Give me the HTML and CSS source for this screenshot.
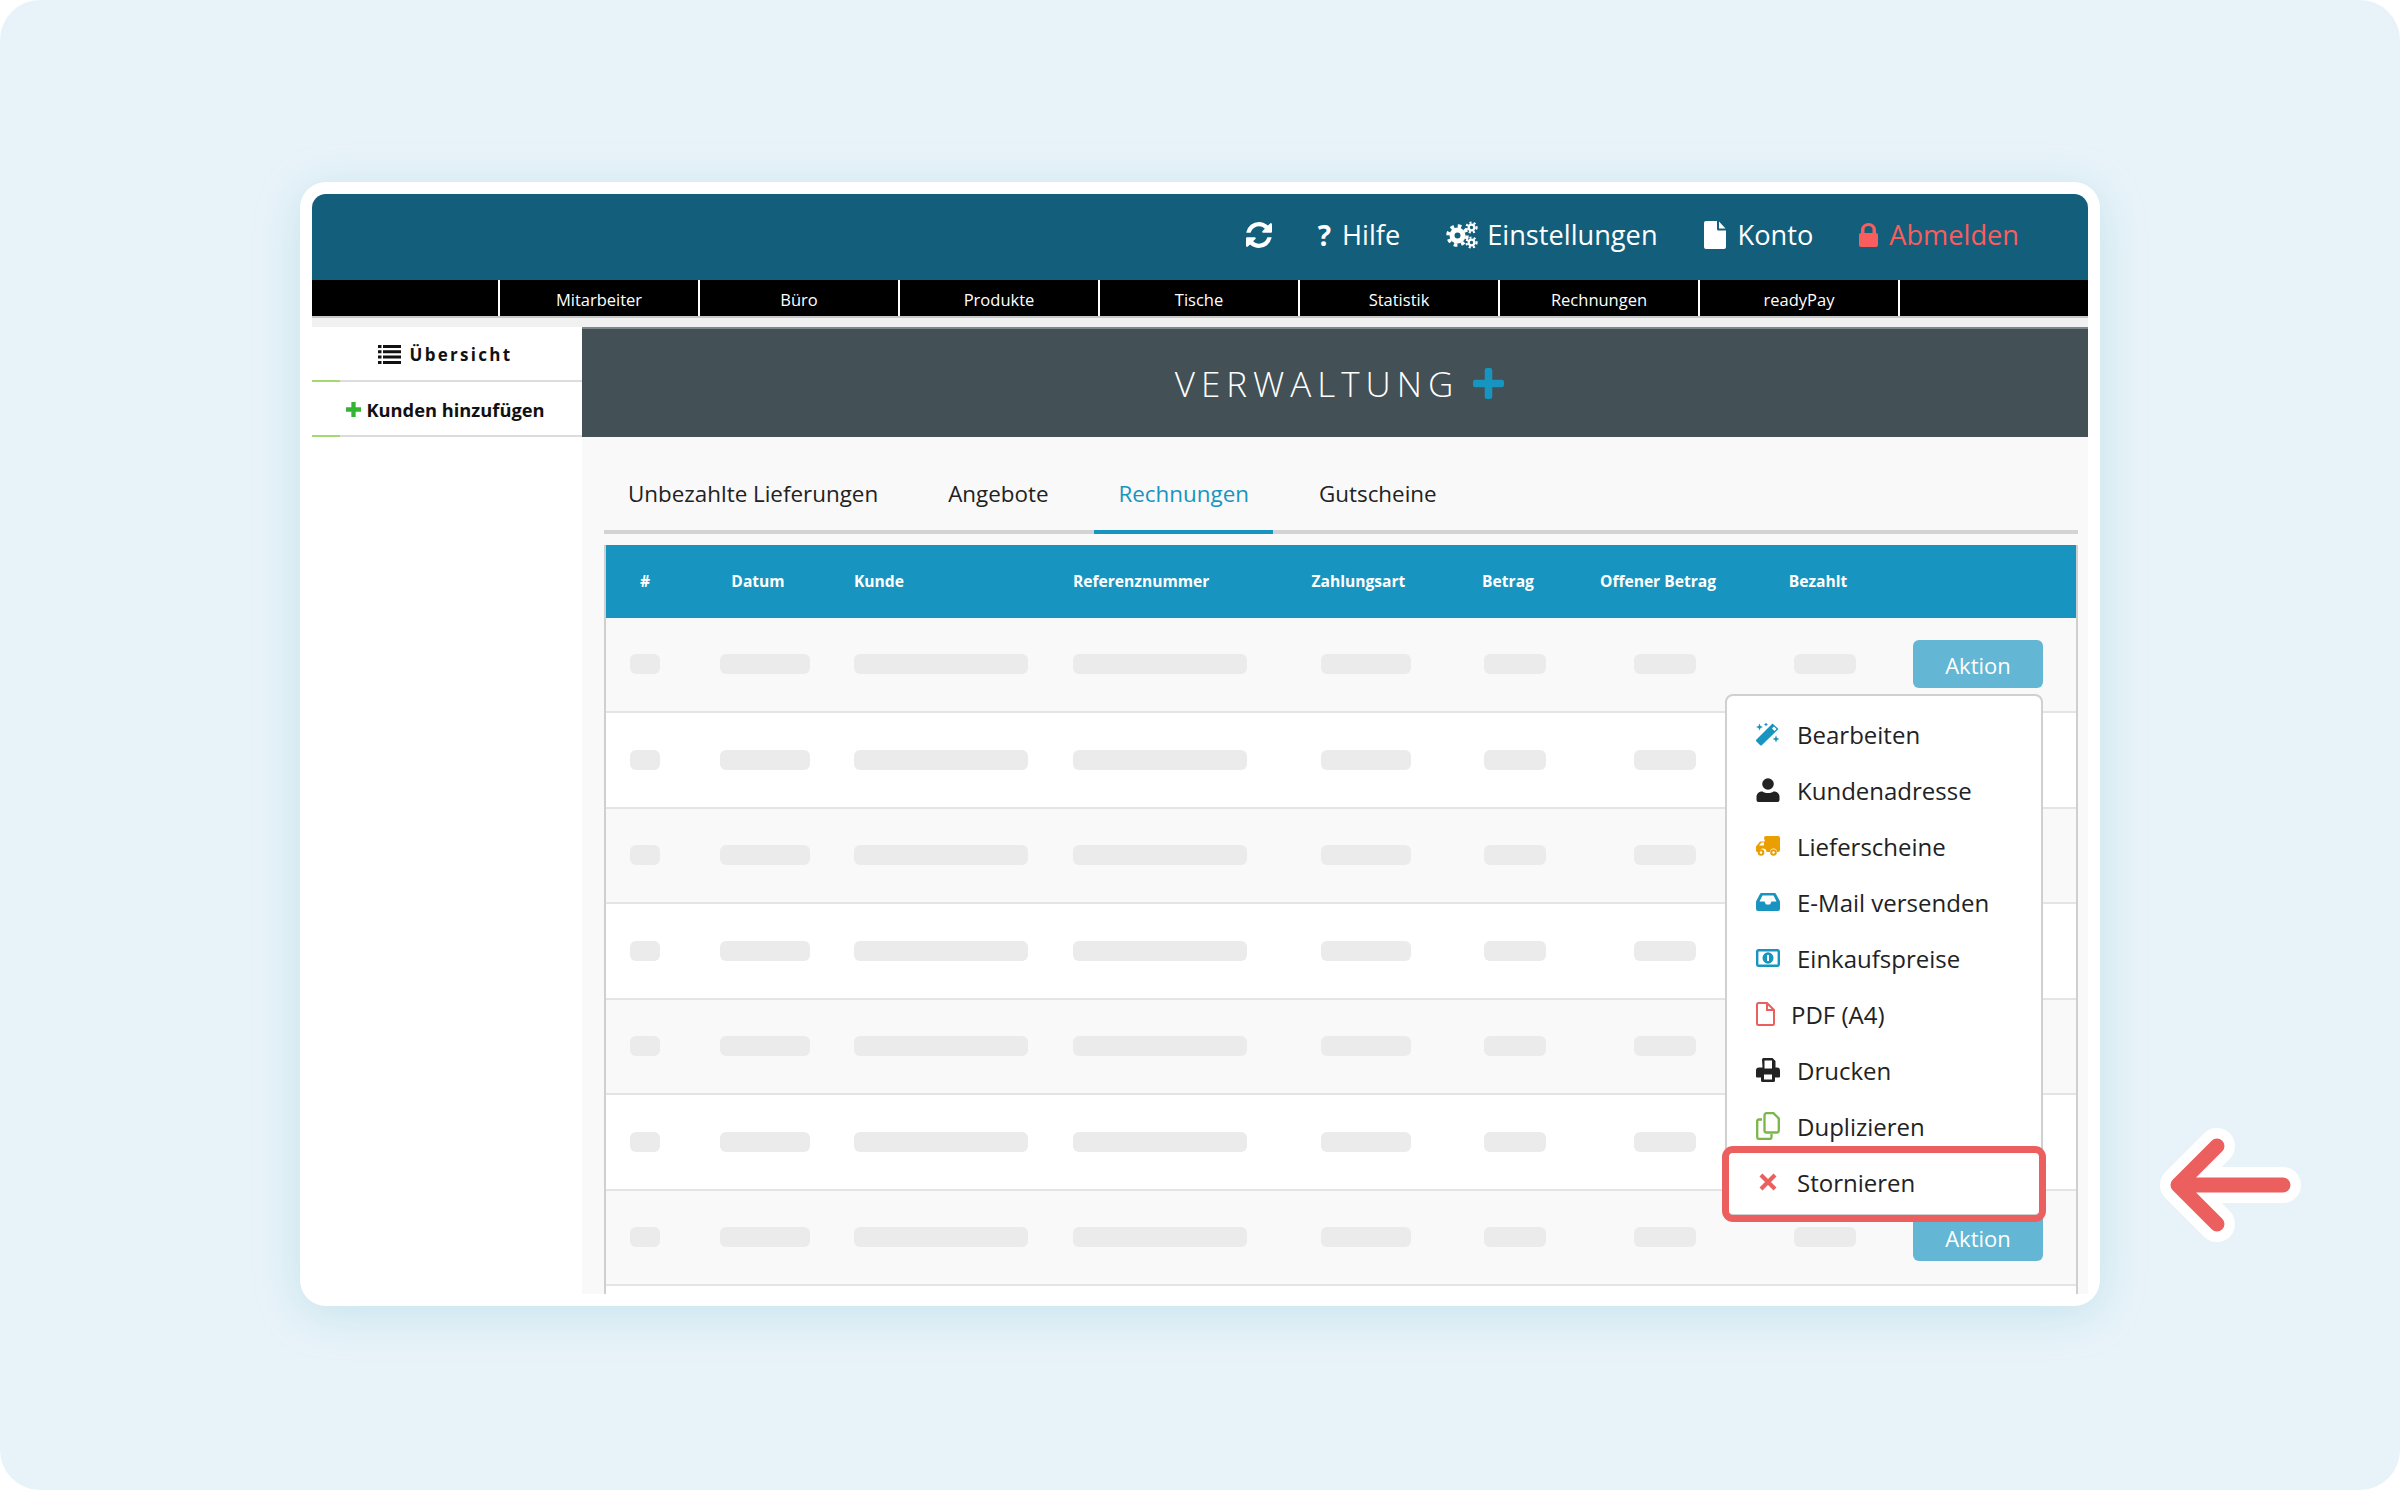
FILE: index.html
```html
<!DOCTYPE html>
<html lang="de">
<head>
    <meta charset="UTF-8">
    <title>Verwaltung</title>
    <link rel="stylesheet" href="styles.css">
</head>
<body>
<div class="panel">
<div class="card">
    <header class="top">
        <a class="top_item"><svg class="ic_refresh" viewBox="128 128 1536 1536"><path fill="#fff" d="M1639 1056q0 5-1 7-64 268-268 434.500t-478 166.500q-146 0-282.500-55t-243.500-157l-129 129q-19 19-45 19t-45-19-19-45v-448q0-26 19-45t45-19h448q26 0 45 19t19 45-19 45l-137 137q71 66 161 102t187 36q134 0 250-65t186-179q11-17 53-117 8-23 30-23h192q13 0 22.500 9.500t9.500 22.500zm25-800v448q0 26-19 45t-45 19h-448q-26 0-45-19t-19-45 19-45l138-138q-148-137-349-137-134 0-250 65t-186 179q-11 17-53 117-8 23-30 23h-199q-13 0-22.500-9.500t-9.500-22.500v-7q65-268 270-434.500t480-166.500q146 0 284 55.500t245 156.500l130-129q19-19 45-19t45 19 19 45z"/></svg></a>
        <a class="top_item"><b class="top_q">?</b>Hilfe</a>
        <a class="top_item"><svg class="ic_cogs" viewBox="0 0 32 28"><g fill="none" stroke="#fff"><circle cx="11.500" cy="14.500" r="5.500" stroke-width="5"/><circle cx="11.500" cy="14.500" r="9.500" stroke-width="3.500" stroke-dasharray="3.600 3.860"/><circle cx="25.500" cy="6.500" r="2.800" stroke-width="2.200"/><circle cx="25.500" cy="6.500" r="5" stroke-width="2.200" stroke-dasharray="2 2.190"/><circle cx="25.500" cy="21.500" r="2.800" stroke-width="2.200"/><circle cx="25.500" cy="21.500" r="5" stroke-width="2.200" stroke-dasharray="2 2.190"/></g></svg>Einstellungen</a>
        <a class="top_item"><svg class="ic_file" viewBox="0 0 22 28"><path fill="#fff" d="M2 0h11v8a1.500 1.500 0 0 0 1.500 1.500h7.500v16.500a2 2 0 0 1-2 2h-18a2 2 0 0 1-2-2v-24a2 2 0 0 1 2-2zM15 0.500l6.500 7h-6.500z"/></svg>Konto</a>
        <a class="top_item top_logout"><svg class="ic_lock" viewBox="0 0 19 24"><path fill="#f95d5d" d="M2 10v-3.500a7.500 6.500 0 0 1 15 0v3.500a2 2 0 0 1 2 2v10a2 2 0 0 1-2 2h-15a2 2 0 0 1-2-2v-10a2 2 0 0 1 2-2zM5.500 10h8v-3.500a4 3.500 0 0 0-8 0z"/></svg>Abmelden</a>
    </header>
    <nav class="bar">
        <span class="bar_first"></span>
        <a>Mitarbeiter</a>
        <a>Büro</a>
        <a>Produkte</a>
        <a>Tische</a>
        <a>Statistik</a>
        <a>Rechnungen</a>
        <a>readyPay</a>
    </nav>
    <div class="strip"></div>
    <div class="layout">
        <aside class="side">
            <a class="side_item side_spaced"><svg class="ic_list" viewBox="0 0 23 19"><path fill="#111" d="M0 0h3.500v3h-3.500zM5 0h18v3h-18zM0 5.300h3.500v3h-3.500zM5 5.300h18v3h-18zM0 10.600h3.500v3h-3.500zM5 10.600h18v3h-18zM0 16h3.500v3h-3.500zM5 16h18v3h-18z"/></svg>Übersicht</a>
            <a class="side_item side_big"><svg class="ic_plus_s" viewBox="0 0 14 14"><path fill="#33b533" d="M5 0h4v5h5v4h-5v5h-4v-5h-5v-4h5z"/></svg>Kunden hinzufügen</a>
        </aside>
        <main class="main">
            <div class="banner">
                <span>VERWALTUNG</span>
                <svg class="ic_plus_b" viewBox="0 0 14 14"><path fill="#1795c0" d="M5.300 1a1 1 0 0 1 1-1h1.400a1 1 0 0 1 1 1v4.300h4.300a1 1 0 0 1 1 1v1.400a1 1 0 0 1-1 1h-4.300v4.300a1 1 0 0 1-1 1h-1.400a1 1 0 0 1-1-1v-4.300h-4.300a1 1 0 0 1-1-1v-1.400a1 1 0 0 1 1-1h4.300z"/></svg>
            </div>
            <div class="content">
                <div class="tabs">
                    <a>Unbezahlte Lieferungen</a>
                    <a>Angebote</a>
                    <a class="tab_on">Rechnungen</a>
                    <a>Gutscheine</a>
                </div>
                <div class="table">
                    <div class="row head">
                        <span>#</span><span class="hc">Datum</span><span class="left">Kunde</span><span class="left">Referenznummer</span><span class="hc">Zahlungsart</span><span class="hc">Betrag</span><span class="hc">Offener Betrag</span><span class="hc">Bezahlt</span><span></span>
                    </div>
                    <div class="row"><i class="sk w30"></i><i class="sk w90"></i><i class="sk w174 left"></i><i class="sk w174 left"></i><i class="sk w90"></i><i class="sk w62"></i><i class="sk w62"></i><i class="sk w62"></i><a class="btn_action">Aktion</a></div>
                    <div class="row"><i class="sk w30"></i><i class="sk w90"></i><i class="sk w174 left"></i><i class="sk w174 left"></i><i class="sk w90"></i><i class="sk w62"></i><i class="sk w62"></i><i class="sk w62"></i></div>
                    <div class="row"><i class="sk w30"></i><i class="sk w90"></i><i class="sk w174 left"></i><i class="sk w174 left"></i><i class="sk w90"></i><i class="sk w62"></i><i class="sk w62"></i><i class="sk w62"></i></div>
                    <div class="row"><i class="sk w30"></i><i class="sk w90"></i><i class="sk w174 left"></i><i class="sk w174 left"></i><i class="sk w90"></i><i class="sk w62"></i><i class="sk w62"></i><i class="sk w62"></i></div>
                    <div class="row"><i class="sk w30"></i><i class="sk w90"></i><i class="sk w174 left"></i><i class="sk w174 left"></i><i class="sk w90"></i><i class="sk w62"></i><i class="sk w62"></i><i class="sk w62"></i></div>
                    <div class="row"><i class="sk w30"></i><i class="sk w90"></i><i class="sk w174 left"></i><i class="sk w174 left"></i><i class="sk w90"></i><i class="sk w62"></i><i class="sk w62"></i><i class="sk w62"></i></div>
                    <div class="row"><i class="sk w30"></i><i class="sk w90"></i><i class="sk w174 left"></i><i class="sk w174 left"></i><i class="sk w90"></i><i class="sk w62"></i><i class="sk w62"></i><i class="sk w62"></i><a class="btn_action">Aktion</a></div>
                    <div class="row"></div>
                </div>
            </div>
        </main>
    </div>

    <ul class="menu">
        <li><svg class="mi" viewBox="0 0 24 24"><path fill="#1795c0" d="M16.500 1.500l6 5.500-16.500 16a1.400 1.400 0 0 1-2 0l-3.500-3.500a1.400 1.400 0 0 1 0-2zM16 6.500l2.500 2.500 2-2-2.500-2.500z"/><path fill="#1795c0" d="M3.500 1.500l1 2.500 2.500 1-2.500 1-1 2.500-1-2.500-2.500-1 2.500-1zM10 0.500l.7 1.300 1.300.7-1.300.7-.7 1.300-.7-1.300-1.300-.7 1.300-.7zM20 13.500l1 2.500 2.500 1-2.500 1-1 2.500-1-2.500-2.500-1 2.500-1z"/></svg>Bearbeiten</li>
        <li><svg class="mi" viewBox="0 0 24 24"><circle cx="12" cy="6" r="5.800" fill="#222"/><path fill="#222" d="M2 24a2 2 0 0 1-1.500-2v-3c0-3.500 2.500-5.500 6-5.500 1.500 1 3.500 1.500 5.500 1.500s4-.5 5.500-1.500c3.500 0 6 2 6 5.500v3a2 2 0 0 1-1.500 2z"/></svg>Kundenadresse</li>
        <li><svg class="mi" viewBox="0 0 24 20"><path fill="#e99f00" d="M8 2a2 2 0 0 1 2-2h12a2 2 0 0 1 2 2v12a2 2 0 0 1-2 2h-1a3.500 3.500 0 0 0-7 0h-3.500a3.500 3.500 0 0 0-7 0h-2a1.500 1.500 0 0 1-1.500-1.500v-4l4-5h5z"/><path fill="#fff" d="M3 9.500l2.500-3h2.500v3z"/><circle cx="5" cy="16.500" r="2.300" fill="none" stroke="#e99f00" stroke-width="2"/><circle cx="17.500" cy="16.500" r="2.300" fill="none" stroke="#e99f00" stroke-width="2"/></svg>Lieferscheine</li>
        <li><svg class="mi" viewBox="0 0 24 18"><path fill="#1795c0" d="M6 0h12c1 0 1.800.5 2.300 1.400l3.700 7v7.600a2 2 0 0 1-2 2h-20a2 2 0 0 1-2-2v-7.600l3.700-7c.5-.9 1.300-1.400 2.300-1.400z"/><path fill="#fff" d="M6.500 2.500h11l3 6h-5l-1.500 3h-4l-1.500-3h-5z"/></svg>E-Mail versenden</li>
        <li><svg class="mi" viewBox="0 0 24 18"><rect x="1.200" y="1.200" width="21.600" height="15.600" rx="1.500" fill="#fff" stroke="#1795c0" stroke-width="2.400"/><ellipse cx="12" cy="9" rx="5.500" ry="5.800" fill="#1795c0"/><rect x="11" y="6" width="2" height="6" fill="#fff"/></svg>Einkaufspreise</li>
        <li class="pdf"><svg class="mi mi_pdf" viewBox="0 0 19 24"><path fill="none" stroke="#ec5f5f" stroke-width="2" d="M2.500 1h8.500l7 7v13.500a1.500 1.500 0 0 1-1.500 1.500h-14a1.500 1.500 0 0 1-1.500-1.500v-19a1.500 1.500 0 0 1 1.500-1.500zM11 1v7h7"/></svg>PDF (A4)</li>
        <li><svg class="mi" viewBox="0 0 24 24"><path fill="#222" d="M6 1.500a1.500 1.500 0 0 1 1.500-1.500h9l3 3v6.500h1.500a3 3 0 0 1 3 3v6a1 1 0 0 1-1 1h-4v3a1.500 1.500 0 0 1-1.500 1.500h-11a1.500 1.500 0 0 1-1.500-1.500v-3h-4a1 1 0 0 1-1-1v-6a3 3 0 0 1 3-3h3.500zM8.500 2.500v8h7.500v-8zM8 16.500v5h8v-5z"/></svg>Drucken</li>
        <li><svg class="mi" viewBox="0 0 24 28"><path fill="none" stroke="#7ab648" stroke-width="2.300" d="M10.500 1.200h7l5.300 5.300v12a2 2 0 0 1-2 2h-10.300a2 2 0 0 1-2-2v-15.300a2 2 0 0 1 2-2zM6 7.500h-3a2 2 0 0 0-1.800 2v15.500a2 2 0 0 0 1.800 2h10.500a2 2 0 0 0 2-2v-3"/></svg>Duplizieren</li>
        <li class="menu_hi"><svg class="mi" viewBox="0 0 24 24"><path fill="none" stroke="#ec5f5f" stroke-width="4.200" d="M5 5l14 14M19 5l-14 14"/></svg>Stornieren</li>
    </ul>

    <svg class="arrow" viewBox="0 0 160 120">
        <path fill="none" stroke="#fff" stroke-width="36" stroke-linecap="round" stroke-linejoin="round" d="M133 60h-105M67 21l-39 39 39 39"/>
        <path fill="none" stroke="#ec5f5f" stroke-width="15" stroke-linecap="round" stroke-linejoin="round" d="M133 60h-105M67 21l-39 39 39 39"/>
    </svg>
</div>
</div>
</body>
</html>
```

FILE: styles.css
```css
* {
    margin: 0;
    padding: 0;
    box-sizing: border-box;
}
body {
    background-color: #fff;
    font-family: "Open Sans", "Noto Sans", sans-serif;
    color: #222;
}
a {
    color: inherit;
    text-decoration: none;
}
svg {
    display: block;
    flex: none;
}

.panel {
    height: 1490px;
    display: flex;
    align-items: center;
    justify-content: center;
    padding-bottom: 2px;
    background-color: #e8f3f9;
    border-radius: 40px;
}
.card {
    position: relative;
    width: 1800px;
    height: 1124px;
    padding: 12px;
    display: flex;
    flex-direction: column;
    background-color: #fff;
    border-radius: 26px;
    box-shadow: 0 8px 46px rgba(110, 185, 210, .28);
}

/* kopf */
.top {
    height: 86px;
    flex: none;
    display: flex;
    align-items: center;
    justify-content: flex-end;
    gap: 46px;
    padding-right: 69px;
    padding-bottom: 5px;
    background-color: #135e7b;
    border-radius: 14px 14px 0 0;
    color: #fff;
    font-size: 27.200px;
}
.top_item {
    display: flex;
    align-items: center;
    line-height: 38px;
}
.top_q {
    margin-right: 11px;
    font-size: 28px;
}
.top_logout {
    color: #f95d5d;
}
.ic_refresh {
    width: 26px;
    height: 26px;
}
.ic_cogs {
    width: 32px;
    height: 28px;
    margin-right: 9px;
}
.ic_file {
    width: 22px;
    height: 28px;
    margin-right: 12px;
}
.ic_lock {
    width: 19px;
    height: 24px;
    margin-right: 11px;
}

/* schwarze leiste */
.bar {
    height: 38px;
    flex: none;
    display: flex;
    background-color: #000;
    border-bottom: 2px solid #c8c8c8;
    color: #fff;
    font-size: 16.500px;
}
.bar a,
.bar_first {
    width: 200px;
    flex: none;
    border-right: 2px solid #fff;
    line-height: 40px;
    text-align: center;
}
.bar_first {
    width: 188px;
}
.strip {
    height: 9px;
    flex: none;
    background-color: #f1f1f1;
}

.layout {
    flex: 1;
    min-height: 0;
    display: flex;
}

/* linke spalte */
.side {
    width: 270px;
    flex: none;
}
.side_item {
    position: relative;
    height: 55px;
    display: flex;
    align-items: center;
    justify-content: center;
    padding: 2px 3px 0 0;
    border-bottom: 2px solid #dcdcdc;
    color: #111;
    font-size: 17px;
    font-weight: 700;
}
.side_item::after {
    content: "";
    position: absolute;
    left: 0;
    bottom: -2px;
    width: 28px;
    height: 2px;
    background-color: #a5d96f;
}
.side_spaced {
    letter-spacing: 2.300px;
}
.side_big {
    font-size: 18.300px;
}
.ic_list {
    width: 23px;
    height: 19px;
    margin-right: 8px;
}
.ic_plus_s {
    width: 15px;
    height: 15px;
    margin-right: 5px;
}

/* inhalt */
.main {
    flex: 1;
    min-width: 0;
    overflow: hidden;
    background-color: #f9f9f9;
}
.banner {
    height: 110px;
    display: flex;
    align-items: center;
    justify-content: center;
    gap: 14px;
    padding-left: 9px;
    background-color: #435055;
    border-top: 2px solid #7d8689;
    color: #fff;
    font-size: 35px;
    font-weight: 300;
    letter-spacing: 6px;
}
.ic_plus_b {
    width: 31px;
    height: 31px;
}
.content {
    padding: 0 10px 0 22px;
}
.tabs {
    height: 97px;
    display: flex;
    gap: 22px;
    border-bottom: 4px solid #d3d3d3;
    font-size: 22.400px;
}
.tabs a {
    height: 97px;
    padding: 0 24px;
    line-height: 113px;
}
.tabs .tab_on {
    border-bottom: 4px solid #1795c0;
    color: #1795c0;
}

.table {
    margin-top: 11px;
    border-left: 2px solid #cfcfcf;
    border-right: 2px solid #cfcfcf;
}
.row {
    height: 95.500px;
    display: grid;
    grid-template-columns: 78px 162px 227px 211px 163px 136px 164px 156px 1fr;
    align-items: center;
    justify-items: center;
    border-bottom: 2px solid #e4e4e4;
}
.row:nth-child(odd) {
    background-color: #fff;
}
.row > :nth-child(3) {
    margin-left: 8px;
}
.head {
    height: 72.500px;
    background-color: #1795c0 !important;
    border-bottom: none;
    color: #fff;
    font-size: 15.600px;
    font-weight: 700;
}
.hc {
    padding-right: 14px;
}
.left {
    justify-self: start;
}

/* platzhalter */
.sk {
    display: block;
    height: 20px;
    background-color: #ebebeb;
    border-radius: 6px;
}
.w30 {
    width: 30px;
}
.w62 {
    width: 62px;
}
.w90 {
    width: 90px;
}
.w174 {
    width: 174px;
}
.btn_action {
    justify-self: end;
    width: 130px;
    height: 48px;
    margin-right: 33px;
    background-color: #63b6d4;
    border-radius: 6px;
    color: #fff;
    font-size: 22px;
    line-height: 50px;
    text-align: center;
}

/* aufklappmenue */
.menu {
    position: absolute;
    left: 1425px;
    top: 512px;
    width: 318px;
    height: 522px;
    padding-top: 10px;
    list-style: none;
    background-color: #fff;
    border: 2px solid #d0d0d0;
    border-radius: 8px;
    font-size: 24px;
}
.menu li {
    position: relative;
    height: 56px;
    display: flex;
    align-items: center;
    padding-left: 29px;
}
.mi {
    width: 24px;
    margin-right: 17px;
}
.mi_pdf {
    width: 19px;
    margin-right: 16px;
}
.menu_hi::after {
    content: "";
    position: absolute;
    left: -5px;
    right: -5px;
    top: -8px;
    bottom: -12px;
    border: 7px solid #ec5f5f;
    border-radius: 11px;
}
.arrow {
    position: absolute;
    left: 1850px;
    top: 943px;
    width: 160px;
    height: 120px;
}
```
